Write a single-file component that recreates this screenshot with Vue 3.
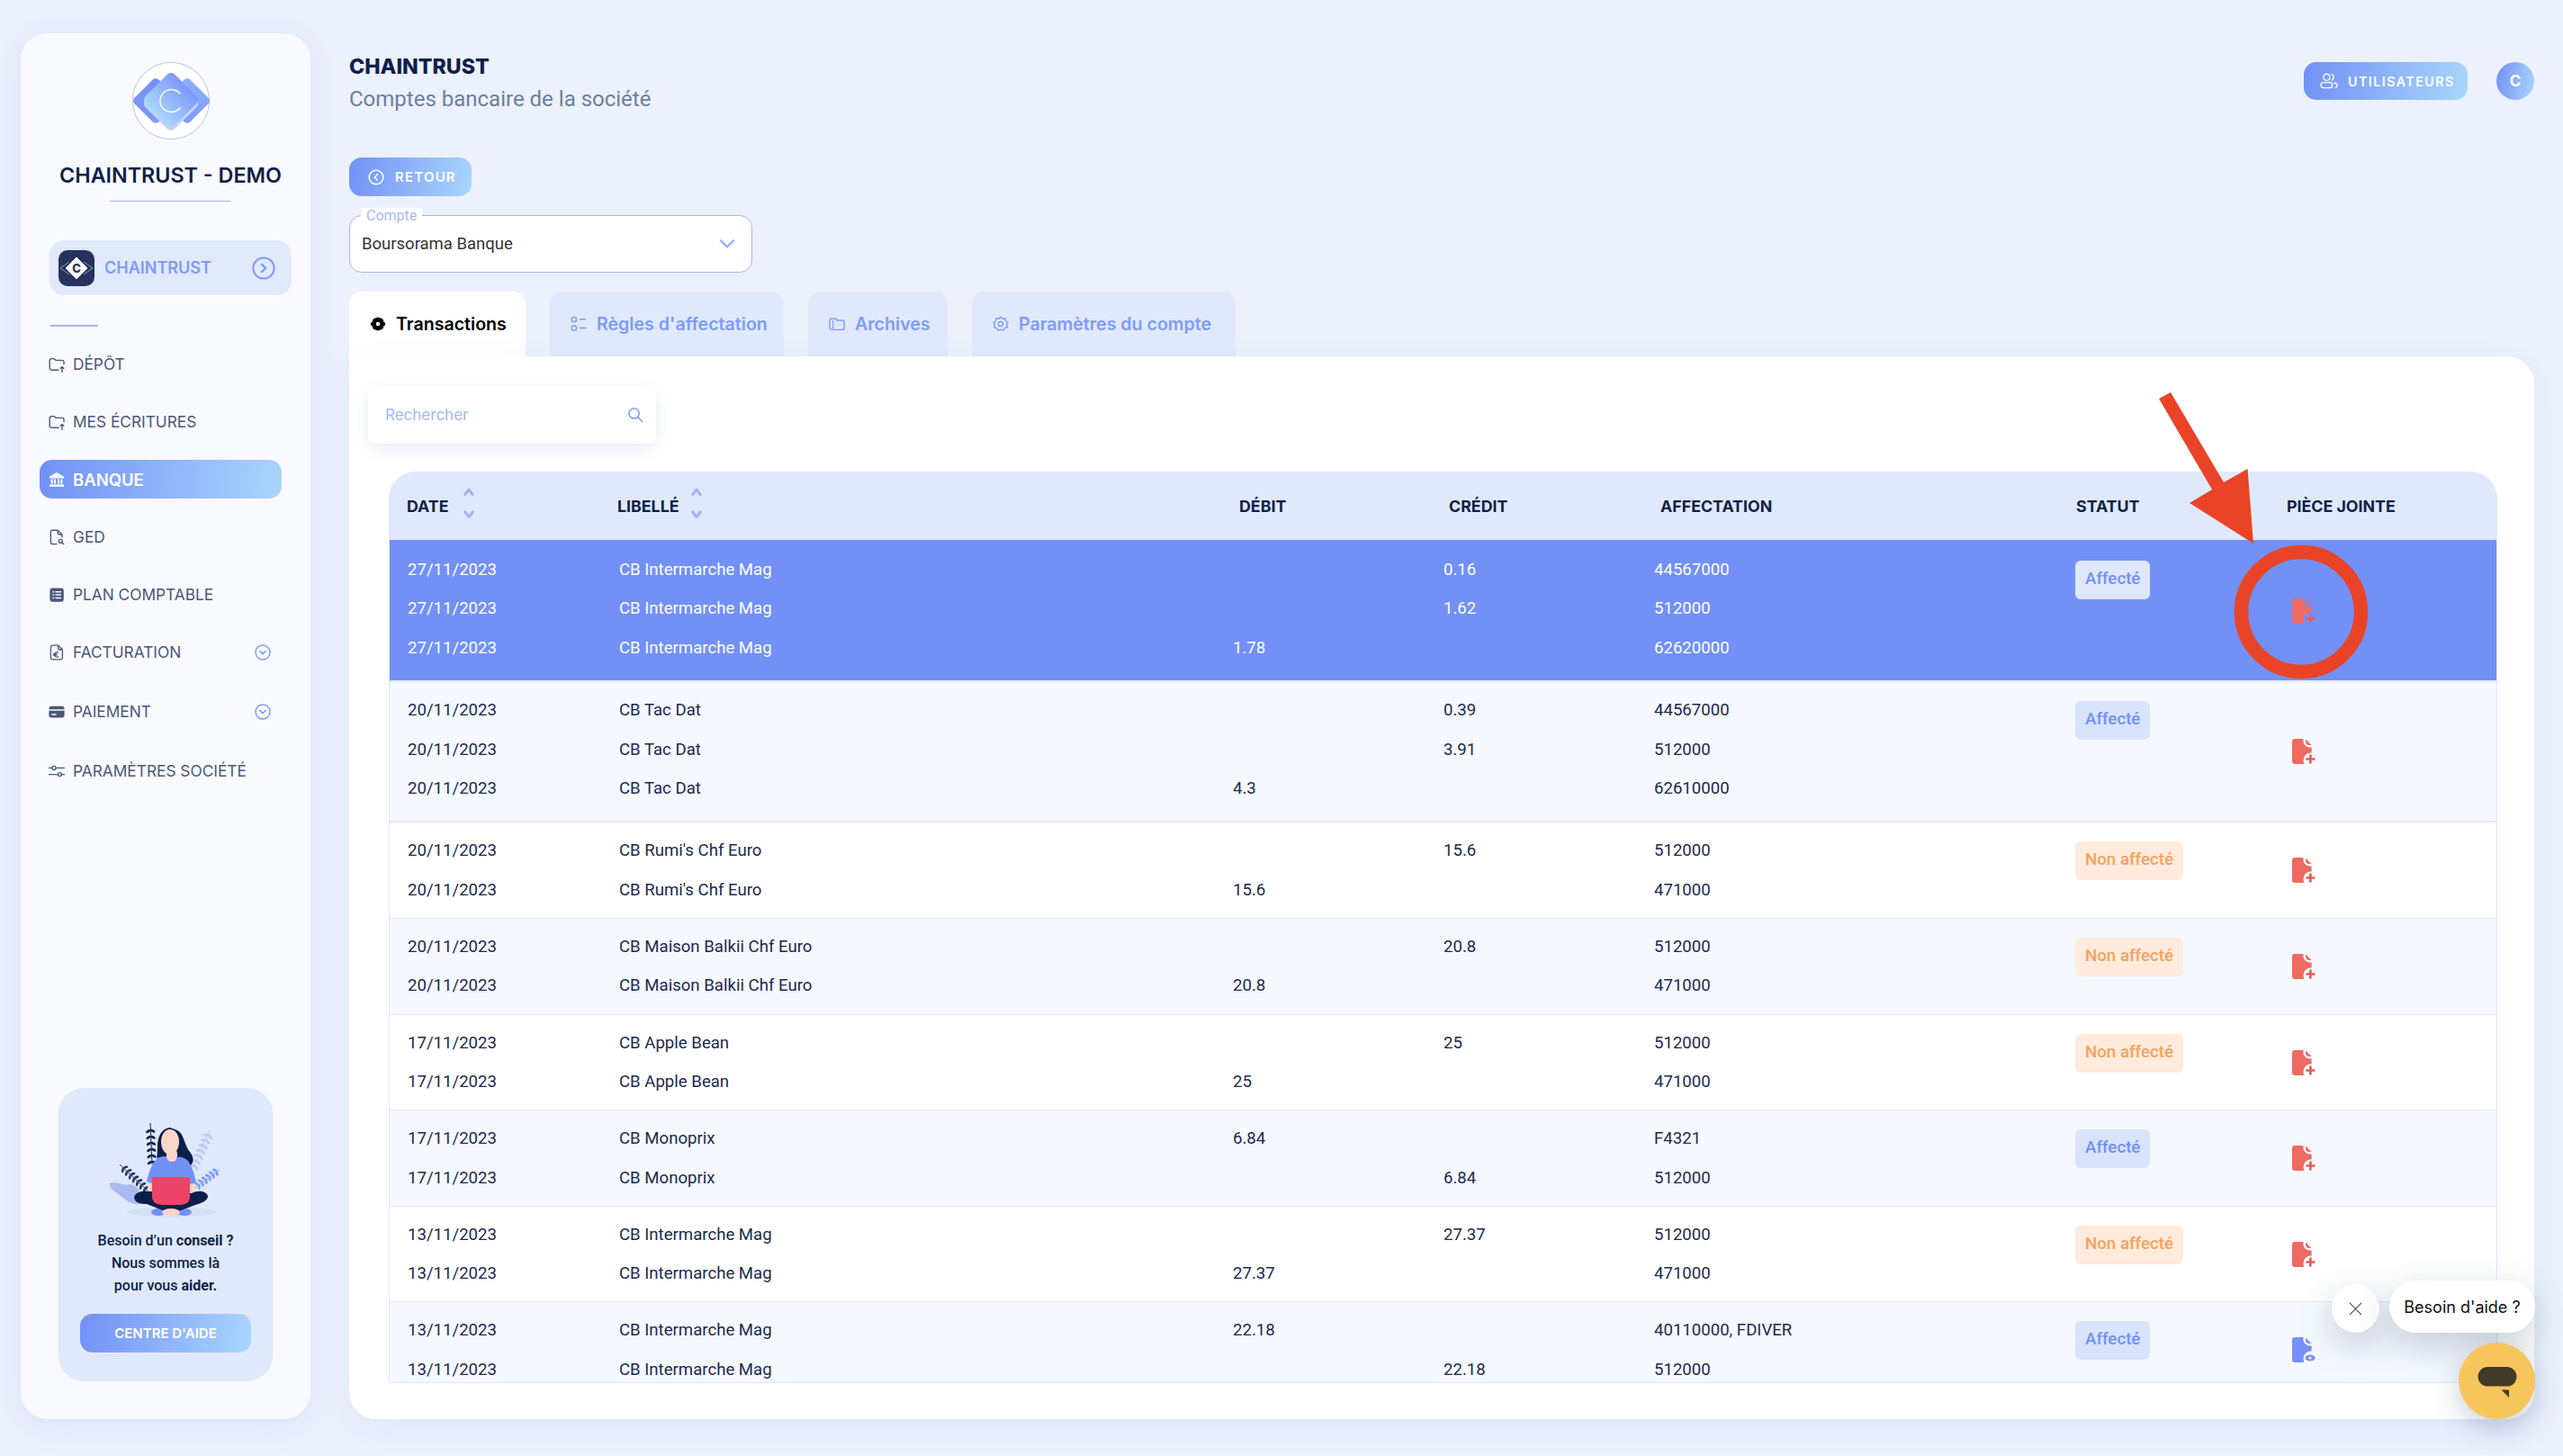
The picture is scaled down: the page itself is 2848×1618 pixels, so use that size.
<script setup>
const nav = [
  { label: 'DÉPÔT', icon: 'folder' },
  { label: 'MES ÉCRITURES', icon: 'folder' },
  { label: 'BANQUE', icon: 'bank', active: true },
  { label: 'GED', icon: 'ged' },
  { label: 'PLAN COMPTABLE', icon: 'plan' },
  { label: 'FACTURATION', icon: 'invoice', more: true },
  { label: 'PAIEMENT', icon: 'card', more: true },
  { label: 'PARAMÈTRES SOCIÉTÉ', icon: 'sliders' },
]

const tabs = [
  { label: 'Transactions', icon: 'tx', active: true },
  { label: "Règles d'affectation", icon: 'rules' },
  { label: 'Archives', icon: 'archive' },
  { label: 'Paramètres du compte', icon: 'gear' },
]

const columns = [
  { label: 'DATE', sort: true },
  { label: 'LIBELLÉ', sort: true },
  { label: 'DÉBIT' },
  { label: 'CRÉDIT' },
  { label: 'AFFECTATION' },
  { label: 'STATUT' },
  { label: 'PIÈCE JOINTE' },
]

function line(date, label, debit, credit, account) {
  return { date, label, debit, credit, account }
}

const rows = [
  {
    selected: true,
    done: true,
    lines: [
      line('27/11/2023', 'CB Intermarche Mag', '', '0.16', '44567000'),
      line('27/11/2023', 'CB Intermarche Mag', '', '1.62', '512000'),
      line('27/11/2023', 'CB Intermarche Mag', '1.78', '', '62620000'),
    ],
  },
  {
    done: true,
    lines: [
      line('20/11/2023', 'CB Tac Dat', '', '0.39', '44567000'),
      line('20/11/2023', 'CB Tac Dat', '', '3.91', '512000'),
      line('20/11/2023', 'CB Tac Dat', '4.3', '', '62610000'),
    ],
  },
  {
    lines: [
      line('20/11/2023', "CB Rumi's Chf Euro", '', '15.6', '512000'),
      line('20/11/2023', "CB Rumi's Chf Euro", '15.6', '', '471000'),
    ],
  },
  {
    lines: [
      line('20/11/2023', 'CB Maison Balkii Chf Euro', '', '20.8', '512000'),
      line('20/11/2023', 'CB Maison Balkii Chf Euro', '20.8', '', '471000'),
    ],
  },
  {
    lines: [
      line('17/11/2023', 'CB Apple Bean', '', '25', '512000'),
      line('17/11/2023', 'CB Apple Bean', '25', '', '471000'),
    ],
  },
  {
    done: true,
    lines: [
      line('17/11/2023', 'CB Monoprix', '6.84', '', 'F4321'),
      line('17/11/2023', 'CB Monoprix', '', '6.84', '512000'),
    ],
  },
  {
    lines: [
      line('13/11/2023', 'CB Intermarche Mag', '', '27.37', '512000'),
      line('13/11/2023', 'CB Intermarche Mag', '27.37', '', '471000'),
    ],
  },
  {
    done: true,
    attached: true,
    lines: [
      line('13/11/2023', 'CB Intermarche Mag', '22.18', '', '40110000, FDIVER'),
      line('13/11/2023', 'CB Intermarche Mag', '', '22.18', '512000'),
    ],
  },
]

// little leaves along a plant stem, for the illustration
function leaves(x1, y1, x2, y2, count, size) {
  const out = []
  const angle = (Math.atan2(y2 - y1, x2 - x1) * 180) / Math.PI
  for (let i = 0; i < count; i++) {
    const t = (i + 0.5) / count
    const x = x1 + (x2 - x1) * t
    const y = y1 + (y2 - y1) * t
    for (const side of [-1, 1]) {
      const a = angle + side * 60
      const r = (a * Math.PI) / 180
      out.push({
        cx: x + Math.cos(r) * size,
        cy: y + Math.sin(r) * size,
        rx: size,
        ry: size * 0.5,
        rot: a,
      })
    }
  }
  return out
}

const plants = [
  { stem: [58, 8, 60, 54], color: '#0c1f4a', items: leaves(58, 12, 60, 54, 6, 2.9) },
  { stem: [24, 54, 56, 84], color: '#22335f', items: leaves(26, 56, 54, 82, 7, 2.8) },
  { stem: [124, 16, 106, 58], color: '#bccaf2', items: leaves(124, 18, 106, 58, 7, 3.1) },
  { stem: [135, 60, 108, 80], color: '#7d9bf9', items: leaves(134, 60, 110, 78, 6, 2.8) },
]
</script>

<template>
  <div class="page">
    <aside class="sidebar">
      <svg class="logo" viewBox="0 0 86 86">
        <defs>
          <linearGradient id="lg-left" x1="0" y1="0" x2="1" y2="1">
            <stop offset="0" stop-color="#7290f6" />
            <stop offset="1" stop-color="#7d9bf9" />
          </linearGradient>
          <linearGradient id="lg-right" x1="0" y1="0" x2="1" y2="1">
            <stop offset="0" stop-color="#8fb0fb" />
            <stop offset="1" stop-color="#7d9bf9" />
          </linearGradient>
          <linearGradient id="lg-mid" x1="0" y1="0" x2="0" y2="1">
            <stop offset="0" stop-color="#7d99f8" />
            <stop offset="1" stop-color="#a9d6fc" />
          </linearGradient>
        </defs>
        <circle cx="43" cy="43" r="42.6" fill="#fff" stroke="#a5b4e8" stroke-width="0.8" />
        <rect x="7" y="24" width="38" height="38" rx="5" fill="url(#lg-left)" transform="rotate(45 26 43)" />
        <rect x="42" y="24" width="38" height="38" rx="5" fill="url(#lg-right)" transform="rotate(45 61 43)" />
        <rect x="20" y="23" width="46" height="46" rx="6" fill="#c6d2f9" transform="rotate(45 43 46)" />
        <rect x="20" y="19" width="46" height="46" rx="6" fill="url(#lg-mid)" transform="rotate(45 43 42)" />
        <path d="M53 35 A12.5 12.5 0 1 0 53 51" fill="none" stroke="#fff" stroke-width="1.4" stroke-linecap="round" />
      </svg>
      <h1 class="brand">CHAINTRUST - DEMO</h1>
      <div class="brand-rule"></div>

      <div class="company">
        <svg class="company-logo" viewBox="0 0 40 40">
          <rect width="40" height="40" rx="10" fill="#27335f" />
          <path d="M12 13 L2 20 L12 27 M28 13 L38 20 L28 27" fill="none" stroke="#b8c0d8" stroke-width="0.7" />
          <path d="M20 8 L32 20 L20 32 L8 20 Z" fill="#fff" stroke="#fff" stroke-linejoin="round" />
          <text x="20" y="24.5" text-anchor="middle" class="company-c">C</text>
        </svg>
        <span class="company-name">CHAINTRUST</span>
        <svg class="company-go" viewBox="0 0 26 26" fill="none" stroke="#7d9bf9" stroke-width="2">
          <circle cx="13" cy="13" r="11.6" />
          <path d="M11 8.8 L15.2 13 L11 17.2" stroke-width="2.4" stroke-linecap="round" stroke-linejoin="round" />
        </svg>
      </div>
      <div class="short-rule"></div>

      <nav class="nav">
        <a v-for="item in nav" :key="item.label" class="nav-item" :class="{ active: item.active, more: item.more }">
          <svg class="nav-icon" viewBox="0 0 18 18">
            <g v-if="item.icon === 'folder'" fill="none" stroke="currentColor" stroke-width="1.4" stroke-linecap="round" stroke-linejoin="round">
              <path d="M11 15.2 H3.2 A2 2 0 0 1 1.2 13.2 V4.6 A2 2 0 0 1 3.2 2.6 H6.4 L8 4.4 H15 A2 2 0 0 1 17 6.4 V8.6" />
              <path d="M15 17.4 V11.6 M13.2 13.2 L15 11.4 L16.8 13.2" />
            </g>
            <g v-else-if="item.icon === 'bank'" fill="currentColor">
              <path d="M9 1 L17 5.4 V7.4 H1 V5.4 Z" />
              <path d="M2.6 8.6 H4.8 V13.4 H2.6 Z M6 8.6 H8 V13.4 H6 Z M10 8.6 H12 V13.4 H10 Z M13.2 8.6 H15.4 V13.4 H13.2 Z" />
              <path d="M1 14.4 H17 V16.8 H1 Z" />
            </g>
            <g v-else-if="item.icon === 'ged'" fill="none" stroke="currentColor" stroke-width="1.4" stroke-linecap="round" stroke-linejoin="round">
              <path d="M9 16.6 H4.4 A2 2 0 0 1 2.4 14.6 V3.2 A2 2 0 0 1 4.4 1.2 H10 L15 6 V9" />
              <path d="M10.2 1.4 V4 A2 2 0 0 0 12.2 6 H14.8" />
              <circle cx="13.4" cy="13.4" r="2" />
              <path d="M15 15 L16.8 16.8" />
            </g>
            <g v-else-if="item.icon === 'plan'">
              <rect x="1.4" y="1.4" width="15.4" height="15.4" rx="3" fill="currentColor" />
              <path d="M5 5.8 H5.6 M8 5.8 H13.4 M5 9.1 H5.6 M8 9.1 H13.4 M5 12.4 H5.6 M8 12.4 H13.4" stroke="#fafbff" stroke-width="1.5" stroke-linecap="round" />
            </g>
            <g v-else-if="item.icon === 'invoice'" fill="none" stroke="currentColor" stroke-width="1.3" stroke-linecap="round" stroke-linejoin="round">
              <path d="M4.4 1.2 H10.6 L15.4 6 V14.8 A2 2 0 0 1 13.4 16.8 H4.4 A2 2 0 0 1 2.4 14.8 V3.2 A2 2 0 0 1 4.4 1.2 Z" />
              <path d="M10.6 1.4 V4 A2 2 0 0 0 12.6 6 H15" />
              <path d="M10.8 9 A2.8 2.8 0 0 0 6.6 11.4 A2.8 2.8 0 0 0 10.8 13.8 M5.4 10.6 H9 M5.4 12.2 H9" />
            </g>
            <g v-else-if="item.icon === 'card'">
              <path d="M3 2.8 H15 A2.6 2.6 0 0 1 17.6 5.4 V6.2 H0.4 V5.4 A2.6 2.6 0 0 1 3 2.8 Z" fill="currentColor" />
              <path d="M0.4 7.8 H17.6 V12.8 A2.6 2.6 0 0 1 15 15.4 H3 A2.6 2.6 0 0 1 0.4 12.8 Z" fill="currentColor" />
              <path d="M4 12 H8" stroke="#fafbff" stroke-width="1.3" stroke-linecap="round" />
            </g>
            <g v-else fill="none" stroke="currentColor" stroke-width="1.4" stroke-linecap="round">
              <path d="M0.6 5.4 H3.8 M8.2 5.4 H17.4 M0.6 12.6 H10.2 M14.6 12.6 H17.4" />
              <circle cx="6" cy="5.4" r="2" />
              <circle cx="12.4" cy="12.6" r="2" />
            </g>
          </svg>
          <span>{{ item.label }}</span>
          <svg v-if="item.more" class="nav-more" viewBox="0 0 18 18" fill="none" stroke="#7d9bf9" stroke-width="1.4">
            <circle cx="9" cy="9" r="8" />
            <path d="M5.8 7.6 L9 10.6 L12.2 7.6" stroke-width="1.5" stroke-linecap="round" stroke-linejoin="round" />
          </svg>
        </a>
      </nav>

      <div class="help">
        <svg class="help-art" viewBox="0 0 150 120">
          <ellipse cx="82" cy="107" rx="50" ry="5.5" fill="#d5dff2" />
          <path d="M13 75 C20 72 28 78 36 76 C44 78 48 84 46 92 L50 98 C40 100 30 94 24 88 C18 84 12 80 13 75 Z" fill="#a9baf0" />
          <g v-for="(plant, i) in plants" :key="i">
            <line :x1="plant.stem[0]" :y1="plant.stem[1]" :x2="plant.stem[2]" :y2="plant.stem[3]" :stroke="plant.color" stroke-width="1" />
            <ellipse
              v-for="(leaf, j) in plant.items"
              :key="j"
              :cx="leaf.cx"
              :cy="leaf.cy"
              :rx="leaf.rx"
              :ry="leaf.ry"
              :fill="plant.color"
              :transform="`rotate(${leaf.rot} ${leaf.cx} ${leaf.cy})`"
            />
          </g>
          <path d="M80 13 C70 14 66 24 66 34 C66 42 64 48 68 52 L100 57 C107 54 107 46 102 40 C96 34 96 20 88 16 Z" fill="#0c1f4a" />
          <rect x="55" y="72" width="6" height="14" rx="2" fill="#fbd5c9" />
          <rect x="102" y="72" width="6" height="14" rx="2" fill="#fbd5c9" />
          <path d="M66 47 C72 44 76 45 78 46 C80 51 86 51 88 46 C92 45 96 46 100 50 C104 56 108 66 109 75 L100 76 L100 70 L62 70 L62 76 L54 73 C56 64 60 52 66 47 Z" fill="#7291f6" />
          <rect x="76" y="36" width="12" height="15" rx="6" fill="#fbd5c9" />
          <ellipse cx="80" cy="29" rx="10" ry="14" fill="#fbd5c9" />
          <ellipse cx="67" cy="107" rx="8" ry="4" fill="#7291f6" />
          <ellipse cx="96" cy="107" rx="8" ry="4" fill="#7291f6" />
          <path d="M40 90 C42 84 50 83 58 84 L104 86 C112 82 120 84 122 89 C122 95 114 97 108 99 L92 105 C86 108 78 108 72 105 L54 98 C46 98 40 96 40 90 Z" fill="#0c1f4a" />
          <ellipse cx="81" cy="107" rx="10" ry="4" fill="#fbd5c9" />
          <path d="M60 68 L102 68 L102 90 C102 97 96 99 90 99 L72 99 C64 99 60 95 60 90 Z" fill="#ec4369" />
        </svg>
        <p class="help-text">Besoin d’un <strong>conseil ?</strong><br />Nous sommes là<br />pour vous <strong>aider.</strong></p>
        <button class="help-btn grad">CENTRE D'AIDE</button>
      </div>
    </aside>

    <main class="main">
      <header class="top">
        <div>
          <h2 class="title">CHAINTRUST</h2>
          <p class="subtitle">Comptes bancaire de la société</p>
        </div>
        <div class="top-actions">
          <button class="users-btn grad">
            <svg viewBox="0 0 20 18" fill="none" stroke="#fff" stroke-width="1.4">
              <circle cx="7.4" cy="4.8" r="3.6" />
              <path d="M13 1.6 A3.4 3.4 0 0 1 13 8" stroke-linecap="round" />
              <rect x="1" y="10.6" width="12.8" height="6" rx="3" />
              <path d="M16 11 C18 11.4 19 12.8 19 14.4 C19 15.4 18.4 16.2 17 16.4" stroke-linecap="round" />
            </svg>
            UTILISATEURS
          </button>
          <div class="avatar grad">C</div>
        </div>
      </header>

      <button class="back-btn grad">
        <svg viewBox="0 0 18 18" fill="none" stroke="#fff" stroke-width="1.5">
          <circle cx="9" cy="9" r="7.8" />
          <path d="M10.4 5.8 L7.2 9 L10.4 12.2" stroke-linecap="round" stroke-linejoin="round" />
        </svg>
        RETOUR
      </button>

      <div class="select">
        <span class="select-label">Compte</span>
        <span class="select-value">Boursorama Banque</span>
        <svg viewBox="0 0 18 12" fill="none" stroke="#a0b1ec" stroke-width="2.4">
          <path d="M2 2.4 L9 9.4 L16 2.4" stroke-linecap="round" stroke-linejoin="round" />
        </svg>
      </div>

      <div class="tabs">
        <div v-for="tab in tabs" :key="tab.label" class="tab" :class="{ active: tab.active }">
          <svg viewBox="0 0 18 18" class="tab-icon">
            <g v-if="tab.icon === 'tx'">
              <path d="M9 1.4 L14 3.2 L17.4 9 L14 14.8 L9 16.6 L4 14.8 L0.6 9 L4 3.2 Z" fill="#000" />
              <circle cx="9" cy="9" r="2.2" fill="#fff" />
              <path d="M0.6 4.6 L3.4 6.4 M17.4 4.6 L14.6 6.4 M0.6 13.4 L3.4 11.6 M17.4 13.4 L14.6 11.6" stroke="#fff" stroke-width="1" />
            </g>
            <g v-else-if="tab.icon === 'rules'" fill="none" stroke="currentColor" stroke-width="1.5" stroke-linecap="round">
              <rect x="1.4" y="1.6" width="5" height="5" rx="1.8" />
              <rect x="1.4" y="11" width="5" height="5" rx="1.8" />
              <path d="M10.4 3.8 H16.4 M10.4 13.6 H16.4" />
            </g>
            <g v-else-if="tab.icon === 'archive'" fill="none" stroke="currentColor" stroke-width="1.4" stroke-linejoin="round">
              <path d="M3 3 H7.4 L9 5 H15 A2 2 0 0 1 17 7 V13.4 A2 2 0 0 1 15 15.4 H3 A2 2 0 0 1 1 13.4 V5 A2 2 0 0 1 3 3 Z" />
              <path d="M4.6 5.6 V7.2 M4.6 9 V10.6 M4.6 12.2 V13.8" stroke-linecap="round" />
            </g>
            <g v-else fill="none" stroke="currentColor" stroke-width="1.4" stroke-linejoin="round">
              <path d="M9 1 L11 3.2 L14 2.8 L14.6 5.8 L17 7.6 L15.6 9.8 L16.4 12.6 L13.6 13.6 L12 16.2 L9 15.2 L6 16.2 L4.4 13.6 L1.6 12.6 L2.4 9.8 L1 7.6 L3.4 5.8 L4 2.8 L7 3.2 Z" />
              <circle cx="9" cy="9" r="2.6" />
            </g>
          </svg>
          {{ tab.label }}
        </div>
      </div>

      <section class="card">
        <div class="search">
          <span>Rechercher</span>
          <svg viewBox="0 0 18 18" fill="none" stroke="#7d9bf9" stroke-width="1.5">
            <circle cx="7.6" cy="7.4" r="5.6" />
            <path d="M11.8 11.6 L16.4 16.4" stroke-linecap="round" />
          </svg>
        </div>

        <div class="table">
          <div class="thead">
            <div v-for="col in columns" :key="col.label" class="th">
              {{ col.label }}
              <svg v-if="col.sort" class="sort" viewBox="0 0 14 36" fill="none" stroke="#a3b5ee" stroke-width="3">
                <path d="M2 9.5 L7 3 L12 9.5 M2 27 L7 33.5 L12 27" stroke-linejoin="round" />
              </svg>
            </div>
          </div>
          <div class="tbody">
            <div v-for="(row, i) in rows" :key="i" class="row" :class="{ selected: row.selected, tint: i % 2 === 1, tall: row.lines.length === 3 }">
              <div class="lines">
                <div v-for="(l, j) in row.lines" :key="j" class="line">
                  <span>{{ l.date }}</span>
                  <span>{{ l.label }}</span>
                  <span>{{ l.debit }}</span>
                  <span>{{ l.credit }}</span>
                  <span>{{ l.account }}</span>
                </div>
              </div>
              <div class="status">
                <span class="chip" :class="row.done ? 'chip-ok' : 'chip-no'">{{ row.done ? 'Affecté' : 'Non affecté' }}</span>
              </div>
              <div class="attach">
                <svg viewBox="0 0 26 29" :class="row.attached ? 'doc-blue' : 'doc-red'">
                  <path class="doc-body" d="M3 0 H12.4 V2 A7 7 0 0 0 19 9.4 H21.6 V15.6 A8 8 0 0 0 12.6 23.6 A7 7 0 0 0 13.6 28 H3 A3 3 0 0 1 0 25 V3 A3 3 0 0 1 3 0 Z" />
                  <path class="doc-body" d="M15 0.6 L21.6 7 H19 A4 4 0 0 1 15 3 Z" />
                  <path v-if="!row.attached" class="doc-mark" d="M20.4 17.5 V27.5 M15.4 22.5 H25.4" />
                  <g v-else>
                    <ellipse cx="20" cy="23" rx="5.6" ry="3.6" class="doc-eye" />
                    <circle cx="20" cy="23" r="1.5" fill="#f5f8ff" />
                  </g>
                </svg>
              </div>
            </div>
          </div>
        </div>
      </section>
    </main>

    <!-- annotation drawn over the screenshot -->
    <svg class="annotation" viewBox="0 0 2848 1618">
      <polygon points="2399,443 2412,436 2471,536 2497.5,521 2504,604 2433,559 2458,544" fill="#e94427" />
      <ellipse cx="2557" cy="680" rx="66.5" ry="66.5" fill="none" stroke="#e94427" stroke-width="15.5" />
    </svg>

    <div class="chat-close">
      <svg viewBox="0 0 16 16" fill="none" stroke="#444" stroke-width="1.1">
        <path d="M1 1 L15 15 M15 1 L1 15" />
      </svg>
    </div>
    <div class="chat-bubble">Besoin d'aide ?</div>
    <div class="chat-btn">
      <svg viewBox="0 0 44 36">
        <rect x="0.5" y="0" width="43" height="21.6" rx="10.8" fill="#433a27" />
        <path d="M26.5 25.6 H35 V34 Z" fill="#433a27" />
      </svg>
    </div>
  </div>
</template>

<style scoped>
.page {
  position: relative;
  display: flex;
  gap: 43px;
  width: 2848px;
  height: 1618px;
  padding: 37px 32px 41px 23px;
  box-sizing: border-box;
  background: #ecf1fd;
  overflow: hidden;
  font-family: Inter, 'Noto Sans', sans-serif;
}

.grad {
  background: linear-gradient(100deg, #7290f6, #a9d6fc);
}

/* sidebar */
.sidebar {
  display: flex;
  flex-direction: column;
  align-items: center;
  flex: none;
  width: 322px;
  padding: 32px 21px 42px 32px;
  box-sizing: border-box;
  border-radius: 30px;
  background: #f9faff;
  box-shadow: 0 4px 30px rgba(160, 180, 240, 0.25);
}

.logo {
  flex: none;
  width: 86px;
  height: 86px;
}

.brand {
  margin: 23px 0 0;
  font-size: 23.3px;
  line-height: 34px;
  font-weight: 600;
  color: #0f1f47;
  white-space: nowrap;
}

.brand-rule {
  flex: none;
  width: 135px;
  height: 1px;
  margin-top: 11px;
  background: #a5b4e8;
}

.company {
  display: flex;
  align-items: center;
  flex: none;
  width: 269px;
  height: 61px;
  margin-top: 43px;
  padding: 0 18px 0 10px;
  box-sizing: border-box;
  border-radius: 16px;
  background: #e1e9fb;
}

.company-logo {
  flex: none;
  width: 40px;
  height: 40px;
}

.company-c {
  font: 800 13px Inter, sans-serif;
  fill: #27335f;
}

.company-name {
  margin-left: 11px;
  font-size: 18px;
  font-weight: 600;
  color: #7d9bf9;
}

.company-go {
  width: 26px;
  height: 26px;
  margin-left: auto;
}

.short-rule {
  flex: none;
  align-self: flex-start;
  width: 53px;
  height: 2px;
  margin: 33px 0 0 1px;
  background: #a5b4e8;
}

.nav {
  display: flex;
  flex-direction: column;
  gap: 21px;
  align-self: flex-start;
  width: 269px;
  margin: 20px 0 0 -11px;
}

.nav-item {
  display: flex;
  align-items: center;
  height: 43px;
  padding: 0 12px 0 10px;
  border-radius: 14px;
  font-size: 17.3px;
  color: #4a5878;
  white-space: nowrap;
}

.nav-item.more {
  margin-bottom: 2px;
}

.nav-item.active {
  background: linear-gradient(100deg, #7290f6, #a9d6fc);
  color: #fff;
  font-size: 18.5px;
  font-weight: 600;
}

.nav-icon {
  flex: none;
  width: 18px;
  height: 18px;
  margin-right: 9px;
}

.nav-more {
  width: 18px;
  height: 18px;
  margin-left: auto;
  margin-right: 0;
}

.help {
  display: flex;
  flex-direction: column;
  align-items: center;
  flex: none;
  align-self: flex-start;
  width: 238px;
  height: 326px;
  margin: auto 0 0 10px;
  padding-top: 31px;
  box-sizing: border-box;
  border-radius: 28px;
  background: #e0e9fb;
}

.help-art {
  flex: none;
  width: 150px;
  height: 120px;
}

.help-text {
  margin: 6px 0 0;
  font-family: Roboto, sans-serif;
  font-size: 16px;
  line-height: 25px;
  font-weight: 500;
  text-align: center;
  color: #0f1f47;
}

.help-text strong {
  font-weight: 700;
}

.help-btn {
  flex: none;
  width: 190px;
  height: 43px;
  margin-top: 19px;
  border: none;
  border-radius: 14px;
  font: 600 15px Inter, sans-serif;
  color: #fff;
}

/* main column */
.main {
  display: flex;
  flex-direction: column;
  flex: 1;
  min-width: 0;
}

.top {
  display: flex;
  justify-content: space-between;
  flex: none;
}

.title {
  margin: 20px 0 0;
  font-size: 23.2px;
  line-height: 34px;
  font-weight: 800;
  color: #0f1f47;
}

.subtitle {
  margin: 1px 0 0;
  font-family: Roboto, sans-serif;
  font-size: 24px;
  line-height: 36px;
  color: #6e7f9e;
}

.top-actions {
  display: flex;
  gap: 32px;
  margin-top: 32px;
}

.users-btn,
.back-btn {
  display: flex;
  align-items: center;
  border: none;
  border-radius: 14px;
  font-family: Inter, sans-serif;
  font-weight: 600;
  color: #fff;
}

.users-btn {
  width: 182px;
  height: 42px;
  padding: 0 0 0 18px;
  gap: 11px;
  font-size: 14.2px;
  letter-spacing: 1.5px;
}

.users-btn svg {
  width: 20px;
  height: 18px;
}

.avatar {
  display: flex;
  align-items: center;
  justify-content: center;
  width: 42px;
  height: 42px;
  border-radius: 50%;
  font-size: 17px;
  font-weight: 700;
  color: #fff;
}

.back-btn {
  flex: none;
  align-self: flex-start;
  gap: 12px;
  width: 136px;
  height: 43px;
  margin-top: 47px;
  padding: 0 0 0 21px;
  font-size: 15px;
  letter-spacing: 1.2px;
}

.back-btn svg {
  width: 18px;
  height: 18px;
}

.select {
  position: relative;
  display: flex;
  align-items: center;
  justify-content: space-between;
  flex: none;
  width: 448px;
  height: 64px;
  margin-top: 21px;
  padding: 0 18px 0 13px;
  box-sizing: border-box;
  border: 1.5px solid #a5b7ee;
  border-radius: 14px;
  background: #fff;
}

.select-label {
  position: absolute;
  top: -9px;
  left: 12px;
  padding: 0 6px;
  background: #fff;
  font: 16px/18px Roboto, sans-serif;
  color: #a9b9f0;
}

.select-value {
  font: 18.5px Roboto, sans-serif;
  color: #333;
}

.select svg {
  width: 18px;
  height: 12px;
}

.tabs {
  display: grid;
  grid-template-columns: 196px 260px 155px 293px;
  gap: 27px;
  flex: none;
  height: 72px;
  margin-top: 21px;
}

.tab {
  display: flex;
  align-items: center;
  gap: 11px;
  padding-left: 23px;
  border-radius: 14px 14px 0 0;
  background: #e0e9fb;
  font-size: 19.6px;
  font-weight: 600;
  color: #7d9bf9;
  white-space: nowrap;
}

.tab.active {
  background: #fff;
  color: #000;
}

.tab-icon {
  flex: none;
  width: 18px;
  height: 18px;
}

.card {
  display: flex;
  flex-direction: column;
  flex: 1;
  min-height: 0;
  padding: 33px 41px 40px 21px;
  border-radius: 0 30px 30px 30px;
  background: #fff;
  box-shadow: 0 8px 30px rgba(170, 190, 240, 0.22);
}

.search {
  display: flex;
  align-items: center;
  justify-content: space-between;
  flex: none;
  width: 320px;
  height: 64px;
  padding: 0 14px 0 19px;
  box-sizing: border-box;
  border-radius: 8px;
  background: #fff;
  box-shadow: 0 6px 18px rgba(150, 170, 235, 0.2);
  font: 17px Inter, sans-serif;
  color: #a6b8f7;
}

.search svg {
  width: 18px;
  height: 18px;
}

/* transactions table */
.table {
  display: flex;
  flex-direction: column;
  flex: 1;
  min-height: 0;
  margin: 31px 0 0 23px;
  overflow: hidden;
}

.thead {
  display: grid;
  grid-template-columns: 254px 691px 233px 235px 462px 234px 1fr;
  flex: none;
  height: 76px;
  border-radius: 30px 30px 0 0;
  background: #e0e9fb;
}

.th {
  display: flex;
  align-items: center;
  gap: 16px;
  margin-left: 20px;
  font-size: 17.8px;
  font-weight: 700;
  color: #0f1f47;
  white-space: nowrap;
}

.th:nth-child(n + 2) {
  margin-left: 0;
}

.th:nth-child(2) {
  gap: 12px;
}

.sort {
  width: 14px;
  height: 36px;
  margin-top: -6px;
}

.tbody {
  flex: 1;
  min-height: 0;
  overflow: hidden;
  border: solid #dde6fb;
  border-width: 0 1px 1px;
}

.row {
  display: grid;
  grid-template-columns: 1853px 234px 1fr;
  padding: 10px 0 8.8px;
  border-bottom: 1px solid #e2e9fb;
  font: 18.6px/43.4px Roboto, sans-serif;
  color: #1c2a4d;
}

.row.tall {
  padding-bottom: 14px;
  border-bottom-width: 2px;
}

.row.tint {
  background: #f5f8ff;
}

.row.selected {
  padding-top: 12px;
  background: #7290f6;
  color: #fff;
}

.line {
  display: grid;
  grid-template-columns: 235px 682px 234px 234px 468px;
}

.line span {
  padding-left: 20px;
  white-space: nowrap;
}

.status {
  padding: 11px 0 0 20px;
}

.chip {
  display: inline-block;
  height: 43px;
  padding: 0 11px;
  border-radius: 6px;
  font-weight: 500;
  font-size: 18.7px;
  line-height: 41px;
  vertical-align: top;
}

.chip-ok {
  background: #d9e3fc;
  color: #7290f6;
}

.selected .chip-ok {
  background: #dfe7fc;
}

.chip-no {
  background: #fdebdd;
  color: #f5a25d;
}

.attach {
  display: flex;
  align-items: center;
  padding-left: 27px;
}

.tall .attach {
  padding-top: 4px;
}

.attach svg {
  width: 26px;
  height: 29px;
}

.doc-red .doc-body {
  fill: #ef6a62;
}

.doc-red .doc-mark {
  fill: none;
  stroke: #ea5a52;
  stroke-width: 2.6;
}

.doc-blue .doc-body,
.doc-blue .doc-eye {
  fill: #7791f8;
}

/* things lying over the page */
.annotation {
  position: absolute;
  inset: 0;
  width: 2848px;
  height: 1618px;
  pointer-events: none;
}

.chat-close {
  position: absolute;
  top: 1427px;
  left: 2591px;
  display: flex;
  align-items: center;
  justify-content: center;
  width: 53px;
  height: 54px;
  border-radius: 50%;
  background: #fff;
  box-shadow: 0 14px 40px rgba(30, 60, 80, 0.24);
}

.chat-close svg {
  width: 15px;
  height: 15px;
}

.chat-bubble {
  position: absolute;
  top: 1423px;
  left: 2655px;
  display: flex;
  align-items: center;
  justify-content: center;
  width: 162px;
  height: 58px;
  border-radius: 29px;
  background: #fff;
  box-shadow: 0 14px 40px rgba(30, 60, 80, 0.24);
  font-size: 18px;
  color: #111;
}

.chat-btn {
  position: absolute;
  top: 1492px;
  left: 2732px;
  display: flex;
  align-items: center;
  justify-content: center;
  width: 85px;
  height: 85px;
  border-radius: 50%;
  background: #f6c65c;
  box-shadow: 0 10px 32px rgba(30, 60, 90, 0.24);
}

.chat-btn svg {
  width: 44px;
  height: 36px;
  margin-top: 4px;
}
</style>
